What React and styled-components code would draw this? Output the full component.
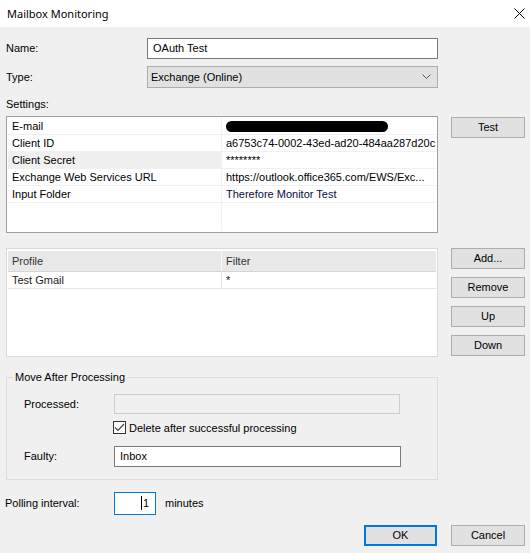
import React from 'react'
import styled, { createGlobalStyle } from 'styled-components'

const GlobalStyle = createGlobalStyle`
  html, body { margin: 0; padding: 0; background: #f0f0f0; }
  body { font-family: "Liberation Sans", Arial, sans-serif; font-size: 11px; color: #000; }
  * { box-sizing: border-box; }
`;

const Window = styled.div`
  width: 530px;
  height: 553px;
  background: #f0f0f0;
  overflow: hidden;
`;

const TitleBar = styled.div`
  height: 27px;
  background: #fff;
  display: flex;
  align-items: center;
  justify-content: space-between;
  padding: 0 5px 1px 7px;
  font-family: "Noto Sans", "Open Sans", sans-serif;
  font-size: 11px;
`;

const Body = styled.div`
  padding: 0 5px 0 6px;
`;

const Row = styled.div`
  display: flex;
  align-items: ${p => p.$align || 'center'};
  margin-top: ${p => p.$top || 0}px;
  margin-left: ${p => p.$left || 0}px;
`;

const Label = styled.div`
  width: ${p => p.$w}px;
  flex-shrink: 0;
  padding-left: ${p => p.$indent || 0}px;
  line-height: 13px;
`;

const TextBox = styled.div`
  width: ${p => p.$w}px;
  height: ${p => p.$h || 21}px;
  background: ${p => (p.$disabled ? '#f0f0f0' : '#fff')};
  border: 1px solid ${p => (p.$focus ? '#0078d7' : p.$disabled ? '#cccccc' : '#7a7a7a')};
  display: flex;
  align-items: center;
  justify-content: ${p => (p.$right ? 'flex-end' : 'flex-start')};
  padding: 0 ${p => (p.$right ? 6 : 4)}px 1px ${p => (p.$right ? 4 : 5)}px;
  flex-shrink: 0;
`;

const Caret = styled.span`
  width: 1px;
  height: 14px;
  background: #000;
  margin-right: 1px;
`;

const Select = styled.div`
  width: 291px;
  height: 22px;
  background: #e1e1e1;
  border: 1px solid #adadad;
  display: flex;
  align-items: center;
  justify-content: space-between;
  padding: 0 6px 1px 3px;
`;

const Button = styled.div`
  width: ${p => p.$w || 74}px;
  height: 21px;
  background: #e1e1e1;
  border: ${p => (p.$default ? '2px solid #0078d7' : '1px solid #adadad')};
  display: flex;
  align-items: center;
  justify-content: center;
  padding-bottom: 1px;
  flex-shrink: 0;
`;

const ButtonColumn = styled.div`
  display: flex;
  flex-direction: column;
  gap: 8px;
  margin-left: 13px;
  margin-top: ${p => p.$top || 0}px;
`;

const PropTable = styled.div`
  width: 432px;
  height: 117px;
  background: #fff;
  border: 1px solid #a0a0a0;
  padding: 1px;
  display: flex;
  flex-direction: column;
`;

const PropRow = styled.div`
  display: flex;
  height: ${p => (p.$fill ? 'auto' : '17px')};
  flex: ${p => (p.$fill ? 1 : 'none')};
  border-bottom: ${p => (p.$fill ? 'none' : '1px solid #f0f0f0')};
`;

const PropName = styled.div`
  width: 214px;
  padding-left: 4px;
  background: ${p => (p.$sel ? '#f0f0f0' : 'transparent')};
  border-right: 1px solid #f0f0f0;
  white-space: nowrap;
  line-height: 16px;
`;

const PropValue = styled.div`
  flex: 1;
  padding-left: 4px;
  white-space: nowrap;
  overflow: hidden;
  line-height: 16px;
  color: ${p => p.$color || '#000'};
`;

const Redacted = styled.div`
  width: 162px;
  height: 11px;
  background: #000;
  border-radius: 6px;
  margin-top: 3px;
`;

const ListView = styled.div`
  width: 432px;
  height: 109px;
  background: #fff;
  border: 1px solid #d9d9d9;
  padding: 1px;
  display: flex;
  flex-direction: column;
`;

const ListHeader = styled.div`
  display: flex;
  height: 22px;
  background: #e8e8e8;
  border-top: 1px solid #fff;
  border-bottom: 1px solid #d5d5d5;
  color: #333;
`;

const ListRow = styled.div`
  display: flex;
  height: 17px;
  border-bottom: 1px solid #e6e6e6;
  color: #222;
`;

const ListCell = styled.div`
  width: ${p => p.$w ? `${p.$w}px` : 'auto'};
  flex: ${p => (p.$w ? 'none' : 1)};
  padding-left: ${p => p.$pad || 4}px;
  display: flex;
  align-items: center;
  border-right: ${p => (p.$w ? `1px solid ${p.$line}` : 'none')};
`;

const GroupBox = styled.fieldset`
  width: 432px;
  height: 109px;
  margin: 14px 0 0 0;
  padding: 0;
  border: 1px solid #dcdcdc;
`;

const Legend = styled.legend`
  margin-left: 6px;
  padding: 0 2px;
  line-height: 12px;
`;

const GroupInner = styled.div`
  padding-left: 17px;
`;

const CheckRow = styled.label`
  display: flex;
  align-items: center;
  margin-left: 89px;
  margin-top: 7px;
  gap: 3px;
  height: 13px;
`;

const CheckBox = styled.span`
  width: 13px;
  height: 13px;
  border: 1px solid #333;
  background: #fff;
  display: flex;
  align-items: center;
  justify-content: center;
`;

const Footer = styled.div`
  display: flex;
  justify-content: flex-end;
  gap: 14px;
  margin-top: 10px;
`;

function CloseIcon() {
  return (
    <svg width="11" height="11" viewBox="0 0 11 11">
      <path d="M0.5 0.5 L10.5 10.5 M10.5 0.5 L0.5 10.5" stroke="#000" strokeWidth="1" fill="none" />
    </svg>
  );
}

function Chevron() {
  return (
    <svg width="9" height="6" viewBox="0 0 9 6">
      <path d="M0.5 0.5 L4.5 4.5 L8.5 0.5" stroke="#555" strokeWidth="1" fill="none" />
    </svg>
  );
}

const settings = [
  { name: 'E-mail', redacted: true },
  { name: 'Client ID', value: 'a6753c74-0002-43ed-ad20-484aa287d20c' },
  { name: 'Client Secret', value: '********', sel: true },
  { name: 'Exchange Web Services URL', value: 'https://outlook.office365.com/EWS/Exc...' },
  { name: 'Input Folder', value: 'Therefore Monitor Test', color: '#0a0a40' },
];

export default function App() {
  return (
    <Window>
      <GlobalStyle />
      <TitleBar>
        <span>Mailbox Monitoring</span>
        <CloseIcon />
      </TitleBar>
      <Body>
        <Row $top={11}>
          <Label $w={141}>Name:</Label>
          <TextBox $w={291}>OAuth Test</TextBox>
        </Row>
        <Row $top={7}>
          <Label $w={141}>Type:</Label>
          <Select>
            <span>Exchange (Online)</span>
            <Chevron />
          </Select>
        </Row>
        <Row $top={10}>
          <Label $w={100}>Settings:</Label>
        </Row>
        <Row $top={5} $align="flex-start">
          <PropTable>
            {settings.map(s => (
              <PropRow key={s.name}>
                <PropName $sel={s.sel}>{s.name}</PropName>
                <PropValue $color={s.color}>
                  {s.redacted ? <Redacted /> : s.value}
                </PropValue>
              </PropRow>
            ))}
            <PropRow $fill>
              <PropName />
              <PropValue />
            </PropRow>
          </PropTable>
          <ButtonColumn $top={1}>
            <Button>Test</Button>
          </ButtonColumn>
        </Row>
        <Row $top={15} $align="flex-start">
          <ListView>
            <ListHeader>
              <ListCell $w={214} $line="#fbfbfb">Profile</ListCell>
              <ListCell>Filter</ListCell>
            </ListHeader>
            <ListRow>
              <ListCell $w={214} $line="#e6e6e6">Test Gmail</ListCell>
              <ListCell>*</ListCell>
            </ListRow>
          </ListView>
          <ButtonColumn>
            <Button>Add...</Button>
            <Button>Remove</Button>
            <Button>Up</Button>
            <Button>Down</Button>
          </ButtonColumn>
        </Row>
        <GroupBox>
          <Legend>Move After Processing</Legend>
          <GroupInner>
            <Row $top={11}>
              <Label $w={90}>Processed:</Label>
              <TextBox $w={286} $h={20} $disabled />
            </Row>
            <CheckRow>
              <CheckBox>
                <svg width="11" height="9" viewBox="0 0 11 9">
                  <path d="M1 4.5 L4 7.5 L10 1" stroke="#444" strokeWidth="1.2" fill="none" />
                </svg>
              </CheckBox>
              <span>Delete after successful processing</span>
            </CheckRow>
            <Row $top={12}>
              <Label $w={90}>Faulty:</Label>
              <TextBox $w={287}>Inbox</TextBox>
            </Row>
          </GroupInner>
        </GroupBox>
        <Row $top={12} $left={-1}>
          <Label $w={109}>Polling interval:</Label>
          <TextBox $w={42} $h={23} $focus $right>
            <Caret />1
          </TextBox>
          <Label $w={80} $indent={9}>minutes</Label>
        </Row>
        <Footer>
          <Button $w={73} $default>OK</Button>
          <Button>Cancel</Button>
        </Footer>
      </Body>
    </Window>
  )
}
